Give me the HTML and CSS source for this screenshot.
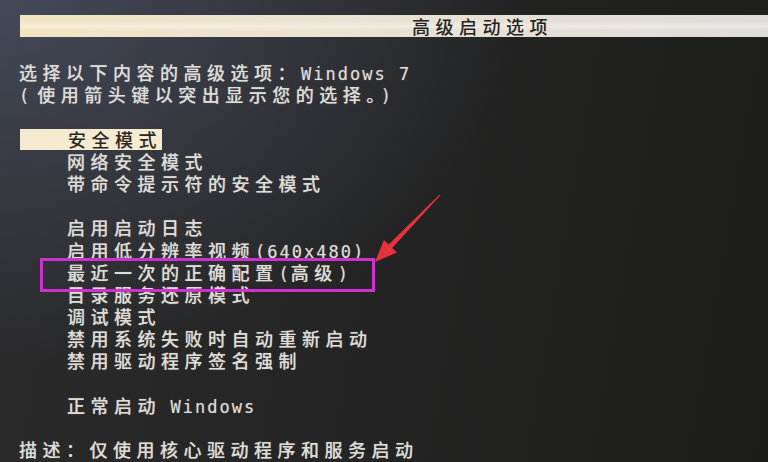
FILE: index.html
```html
<!DOCTYPE html>
<html lang="zh-CN">
<head>
    <meta charset="UTF-8">
    <meta name="viewport" content="width=device-width, initial-scale=1.0">
    <title>高级启动选项</title>
    <link rel="stylesheet" href="styles.css">
</head>
<body>
    <div class="screen">
        <div class="title-bar">高级启动选项</div>

        <div class="menu">
            <p class="line">选择以下内容的高级选项：<span class="en">Windows 7</span></p>
            <p class="line"><span class="en open">(</span>使用箭头键以突出显示您的选择。<span class="en">)</span></p>
            <p class="line blank"></p>

            <p class="line"><span class="selected">安全模式</span></p>
            <p class="line item">网络安全模式</p>
            <p class="line item">带命令提示符的安全模式</p>
            <p class="line blank"></p>

            <p class="line item">启用启动日志</p>
            <p class="line item">启用低分辨率视频<span class="en">(640x480)</span></p>
            <p class="line item marked">最近一次的正确配置<span class="en">(</span>高级<span class="en">)</span></p>
            <p class="line item">目录服务还原模式</p>
            <p class="line item">调试模式</p>
            <p class="line item">禁用系统失败时自动重新启动</p>
            <p class="line item">禁用驱动程序签名强制</p>
            <p class="line blank"></p>

            <p class="line item">正常启动 <span class="en">Windows</span></p>
            <p class="line blank"></p>

            <p class="line">描述：仅使用核心驱动程序和服务启动</p>
        </div>

        <!-- 红色箭头标注 -->
        <svg class="arrow" width="80" height="80" viewBox="0 0 80 80">
            <polygon points="7,72 15.9,49.9 20.6,54.5 71.6,4.6 72.4,5.3 24.2,57.9 28.9,62.5" fill="#e5323c"/>
        </svg>
    </div>
</body>
</html>
```

FILE: styles.css
```css
:root {
    --text-color: #dedcd6;
    --mark-color: #cc33cc;
    --line-height: 22.2px;
}

* {
    box-sizing: border-box;
    margin: 0;
    padding: 0;
}

html, body {
    width: 768px;
    height: 462px;
    overflow: hidden;
}

body {
    background: #222;
}

.screen {
    position: relative;
    width: 768px;
    height: 462px;
    padding-top: 15px;
    font-family: "Noto Sans CJK SC", "DejaVu Sans", sans-serif;
    font-size: 18px;
    font-weight: 500;
    letter-spacing: 5.5px;
    color: var(--text-color);
    text-shadow: 0 0 1px rgba(220, 220, 214, 0.5);
    background:
        radial-gradient(ellipse 520px 360px at 0 0, rgba(72, 78, 96, 0.85), rgba(60, 62, 72, 0) 100%),
        linear-gradient(100deg, #2b2b2c 0%, #252525 45%, #1c1c1b 100%);
}

.title-bar {
    margin-left: 20px;
    height: 22px;
    line-height: 22px;
    padding-left: 392px;
    color: #262422;
    text-shadow: none;
    background:
        linear-gradient(180deg, rgba(255, 255, 255, 0) 30%, rgba(255, 255, 255, 0.35) 50%, rgba(255, 255, 255, 0) 70%),
        linear-gradient(90deg, #f2e4c2 0%, #ede4d0 30%, #dedcda 100%);
}

.menu {
    margin-top: 24px;
    padding-left: 19px;
}

.line {
    height: var(--line-height);
    line-height: var(--line-height);
    white-space: nowrap;
}

.item {
    padding-left: 48px;
}

.en {
    font-family: "DejaVu Sans Mono", "Liberation Mono", monospace;
    font-size: 17px;
    font-weight: normal;
    letter-spacing: 2px;
}

.open {
    letter-spacing: 8px;
}

.selected {
    display: inline-block;
    height: 21px;
    line-height: 21px;
    padding-left: 48px;
    margin-left: 1px;
    color: #2a2724;
    text-shadow: none;
    background: #f4ebd0;
}

.marked {
    position: relative;
}

.marked::after {
    content: "";
    position: absolute;
    left: 21px;
    top: -3px;
    width: 329px;
    height: 28px;
    border: 3px solid var(--mark-color);
}

.arrow {
    position: absolute;
    left: 368px;
    top: 190px;
}
```
